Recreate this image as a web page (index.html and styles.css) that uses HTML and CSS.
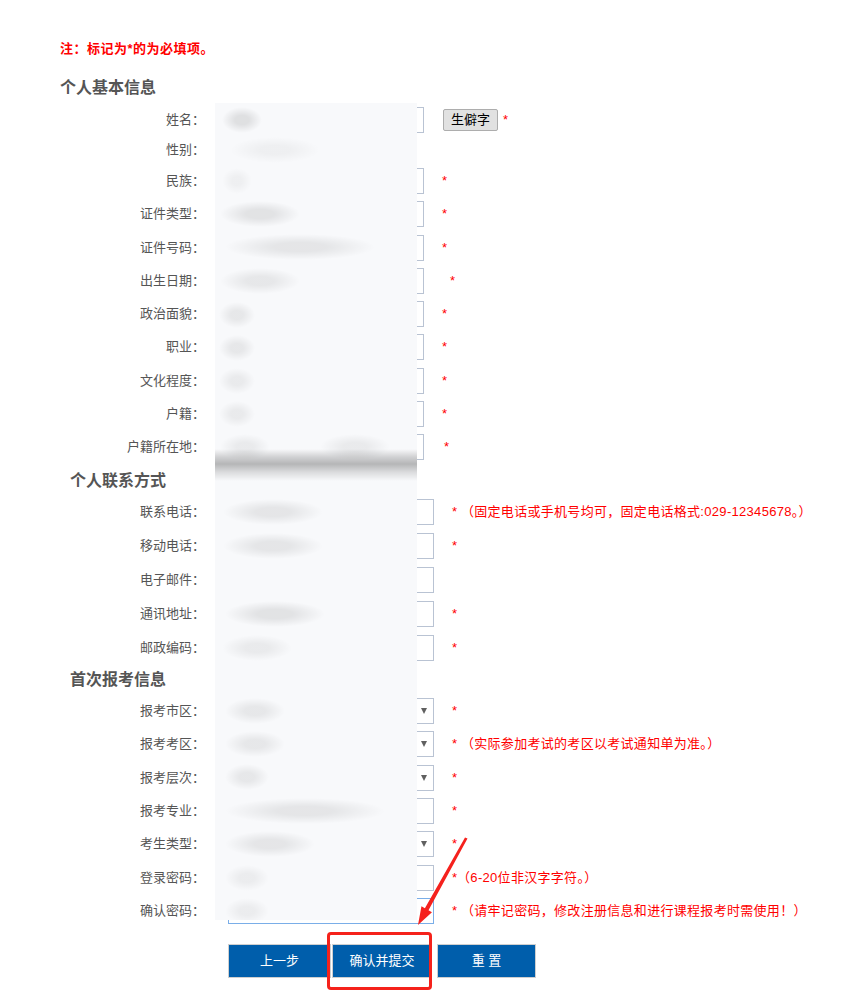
FILE: index.html
```html
<!DOCTYPE html>
<html lang="zh-CN">
<head>
<meta charset="utf-8">
<title>报名信息确认</title>
<link rel="stylesheet" href="styles.css">
</head>
<body>
<div class="page">
  <p class="note">注：标记为*的为必填项。</p>

  <h3 class="sec sec-1">个人基本信息</h3>
  <div class="rows rows-1">
    <div class="row r-name"><span class="label">姓名：</span><div class="field"><div class="input"></div><button class="rare">生僻字</button><span class="star star-tight">*</span></div></div>
    <div class="row r-sex"><span class="label">性别：</span><div class="field"><span class="radio-text">男 女</span></div></div>
    <div class="row"><span class="label">民族：</span><div class="field"><div class="input"></div><span class="star">*</span></div></div>
    <div class="row"><span class="label">证件类型：</span><div class="field"><div class="input"></div><span class="star">*</span></div></div>
    <div class="row"><span class="label">证件号码：</span><div class="field"><div class="input"></div><span class="star">*</span></div></div>
    <div class="row"><span class="label">出生日期：</span><div class="field"><div class="input"></div><span class="star star-date">*</span></div></div>
    <div class="row"><span class="label">政治面貌：</span><div class="field"><div class="input"></div><span class="star">*</span></div></div>
    <div class="row"><span class="label">职业：</span><div class="field"><div class="input"></div><span class="star">*</span></div></div>
    <div class="row"><span class="label">文化程度：</span><div class="field"><div class="input"></div><span class="star">*</span></div></div>
    <div class="row"><span class="label">户籍：</span><div class="field"><div class="input"></div><span class="star">*</span></div></div>
    <div class="row"><span class="label">户籍所在地：</span><div class="field"><div class="input select"><span class="arrow"></span></div><span class="star star-sel">*</span></div></div>
  </div>

  <h3 class="sec sec-2">个人联系方式</h3>
  <div class="rows rows-2 wide">
    <div class="row"><span class="label">联系电话：</span><div class="field"><div class="input"></div><span class="star">*</span><span class="hint">&nbsp;（固定电话或手机号均可，固定电话格式:029-12345678。）</span></div></div>
    <div class="row"><span class="label">移动电话：</span><div class="field"><div class="input"></div><span class="star">*</span></div></div>
    <div class="row"><span class="label">电子邮件：</span><div class="field"><div class="input"></div></div></div>
    <div class="row"><span class="label">通讯地址：</span><div class="field"><div class="input"></div><span class="star">*</span></div></div>
    <div class="row"><span class="label">邮政编码：</span><div class="field"><div class="input"></div><span class="star">*</span></div></div>
  </div>

  <h3 class="sec sec-3">首次报考信息</h3>
  <div class="rows rows-3 wide">
    <div class="row"><span class="label">报考市区：</span><div class="field"><div class="input select"><span class="arrow"></span></div><span class="star">*</span></div></div>
    <div class="row"><span class="label">报考考区：</span><div class="field"><div class="input select"><span class="arrow"></span></div><span class="star">*</span><span class="hint">&nbsp;（实际参加考试的考区以考试通知单为准。）</span></div></div>
    <div class="row"><span class="label">报考层次：</span><div class="field"><div class="input select"><span class="arrow"></span></div><span class="star">*</span></div></div>
    <div class="row"><span class="label">报考专业：</span><div class="field"><div class="input"></div><span class="star">*</span></div></div>
    <div class="row"><span class="label">考生类型：</span><div class="field"><div class="input select"><span class="arrow"></span></div><span class="star">*</span></div></div>
    <div class="row"><span class="label">登录密码：</span><div class="field"><div class="input"></div><span class="star">*</span><span class="hint">（6-20位非汉字字符。）</span></div></div>
    <div class="row"><span class="label">确认密码：</span><div class="field"><div class="input focus"></div><span class="star">*</span><span class="hint">&nbsp;（请牢记密码，修改注册信息和进行课程报考时需使用！）</span></div></div>
  </div>

  <div class="btns">
    <button class="btn btn-prev">上一步</button>
    <button class="btn btn-submit">确认并提交</button>
    <button class="btn btn-reset">重 置</button>
  </div>

  <div class="mask"></div>
  <div class="mark-box"></div>
  <svg class="mark-arrow" width="80" height="100" viewBox="0 0 80 100">
    <path d="M67.5 8.5 L28.5 80.2 L31.95 82.15 L18 95 L21.45 76.35 L24.9 78.3 L65 7.5 Z" fill="#f5211d"/>
  </svg>
</div>
</body>
</html>
```

FILE: styles.css
```css
body {
  margin: 0;
  background: #fff;
  font-family: "Liberation Sans", "Noto Sans CJK SC", sans-serif;
  font-size: 13px;
  color: #555;
}

.page {
  position: relative;
  width: 859px;
  height: 1003px;
  overflow: hidden;
}

.note {
  margin: 39px 0 0 60px;
  line-height: 20px;
  font-size: 13px;
  font-weight: bold;
  color: #f00;
  letter-spacing: 0.5px;
}

.sec {
  margin: 0;
  height: 24px;
  line-height: 24px;
  font-size: 16px;
  font-weight: bold;
  color: #555;
}
.sec-1 { margin-top: 17px; margin-left: 60px; }
.sec-2 { margin-top: 5.25px; margin-left: 70px; }
.sec-3 { margin-top: 3px; margin-left: 70px; }

.rows-1 { margin-top: 4.5px; }
.rows-2 { margin-top: 2px; }
.rows-3 { margin-top: 2.3px; }

.row {
  display: grid;
  grid-template-columns: 205px 1fr;
  column-gap: 23px;
  align-items: center;
  height: 33.25px;
}
.rows-1 .r-name { height: 31px; }
.rows-1 .r-sex { height: 29px; }
.rows-2 .row { height: 34px; }
.rows-3 .row { height: 33.33px; }

.label {
  text-align: right;
  white-space: nowrap;
  color: #555;
  line-height: 18px;
}

.field {
  display: flex;
  align-items: center;
  white-space: nowrap;
}

.input {
  box-sizing: border-box;
  width: 196px;
  height: 26px;
  border: 1px solid #b9c3d3;
  background: #fff;
  flex: none;
}
.wide .input { width: 206px; }
.input.focus { border-color: #7aaee8; }

.select {
  display: flex;
  justify-content: flex-end;
  align-items: center;
  padding-right: 6px;
}
.arrow {
  width: 0;
  height: 0;
  border-left: 3.5px solid transparent;
  border-right: 3.5px solid transparent;
  border-top: 6px solid #606060;
}

.star {
  color: #f00;
  margin-left: 18px;
  line-height: 18px;
}
.star-tight { margin-left: 5px; }
.star-date { margin-left: 26px; }
.star-sel { margin-left: 20px; }

.hint {
  color: #f00;
  line-height: 18px;
  letter-spacing: 0.3px;
}

.radio-text { color: #ccc; margin-left: 10px; }

.rare {
  box-sizing: border-box;
  margin-left: 19px;
  width: 55px;
  height: 22px;
  padding: 0;
  border: 1px solid #adadad;
  border-radius: 2px;
  background: #e1e1e1;
  font-family: "Liberation Sans", "Noto Sans CJK SC", sans-serif;
  font-size: 13px;
  color: #000;
  line-height: 20px;
}

.btns {
  display: flex;
  margin: 16.4px 0 0 228px;
}
.btn {
  box-sizing: border-box;
  height: 34px;
  padding: 0;
  border: 1px solid #cfcfcf;
  background: #005eab;
  color: #fff;
  font-family: "Liberation Sans", "Noto Sans CJK SC", sans-serif;
  font-size: 13px;
  line-height: 32px;
}
.btn-prev { width: 103px; }
.btn-submit { width: 100px; margin-left: 1px; }
.btn-reset { width: 99px; margin-left: 5px; }

/* blurred privacy mask laid over the field column */
.mask {
  position: absolute;
  left: 215px;
  top: 103px;
  width: 202px;
  height: 817px;
  background-color: #f8f9fb;
  background-image:
    linear-gradient(to bottom, transparent 346px, rgba(0,0,0,0.16) 354px, rgba(0,0,0,0.27) 361px, rgba(0,0,0,0.12) 369px, transparent 378px),
    radial-gradient(closest-side, rgba(0,0,0,0.10) 35%, rgba(0,0,0,0)),
    radial-gradient(closest-side, rgba(0,0,0,0.04) 35%, rgba(0,0,0,0)),
    radial-gradient(closest-side, rgba(0,0,0,0.04) 35%, rgba(0,0,0,0)),
    radial-gradient(closest-side, rgba(0,0,0,0.09) 35%, rgba(0,0,0,0)),
    radial-gradient(closest-side, rgba(0,0,0,0.08) 35%, rgba(0,0,0,0)),
    radial-gradient(closest-side, rgba(0,0,0,0.07) 35%, rgba(0,0,0,0)),
    radial-gradient(closest-side, rgba(0,0,0,0.07) 35%, rgba(0,0,0,0)),
    radial-gradient(closest-side, rgba(0,0,0,0.07) 35%, rgba(0,0,0,0)),
    radial-gradient(closest-side, rgba(0,0,0,0.06) 35%, rgba(0,0,0,0)),
    radial-gradient(closest-side, rgba(0,0,0,0.06) 35%, rgba(0,0,0,0)),
    radial-gradient(closest-side, rgba(0,0,0,0.06) 35%, rgba(0,0,0,0)),
    radial-gradient(closest-side, rgba(0,0,0,0.06) 35%, rgba(0,0,0,0)),
    radial-gradient(closest-side, rgba(0,0,0,0.08) 35%, rgba(0,0,0,0)),
    radial-gradient(closest-side, rgba(0,0,0,0.08) 35%, rgba(0,0,0,0)),
    radial-gradient(closest-side, rgba(0,0,0,0.09) 35%, rgba(0,0,0,0)),
    radial-gradient(closest-side, rgba(0,0,0,0.06) 35%, rgba(0,0,0,0)),
    radial-gradient(closest-side, rgba(0,0,0,0.07) 35%, rgba(0,0,0,0)),
    radial-gradient(closest-side, rgba(0,0,0,0.07) 35%, rgba(0,0,0,0)),
    radial-gradient(closest-side, rgba(0,0,0,0.07) 35%, rgba(0,0,0,0)),
    radial-gradient(closest-side, rgba(0,0,0,0.08) 35%, rgba(0,0,0,0)),
    radial-gradient(closest-side, rgba(0,0,0,0.08) 35%, rgba(0,0,0,0)),
    radial-gradient(closest-side, rgba(0,0,0,0.05) 35%, rgba(0,0,0,0)),
    radial-gradient(closest-side, rgba(0,0,0,0.05) 35%, rgba(0,0,0,0));
  background-size:
    100% 100%,
    40px 26px, 90px 26px, 30px 26px, 80px 26px, 150px 26px, 80px 26px,
    36px 26px, 36px 26px, 36px 26px, 36px 26px, 50px 26px, 70px 26px,
    100px 26px, 100px 26px, 100px 26px, 70px 26px, 60px 26px, 60px 26px,
    44px 26px, 160px 26px, 90px 26px, 44px 26px, 44px 26px;
  background-position:
    0 0,
    7px 4px, 15px 34px, 7px 65px, 5px 98px, 10px 131px, 5px 165px,
    4px 199px, 4px 232px, 4px 265px, 4px 298px, 5px 331px, 105px 331px,
    8px 396px, 8px 430px, 10px 498px, 7px 532px, 10px 595px, 10px 628px,
    10px 661px, 10px 695px, 10px 728px, 10px 762px, 10px 795px;
  background-repeat: no-repeat;
}

/* red annotation drawn over the screenshot */
.mark-box {
  position: absolute;
  left: 327px;
  top: 932px;
  width: 105px;
  height: 58px;
  box-sizing: border-box;
  border: 3px solid #f5221b;
  border-radius: 4px;
}
.mark-arrow {
  position: absolute;
  left: 400px;
  top: 830px;
}
```
